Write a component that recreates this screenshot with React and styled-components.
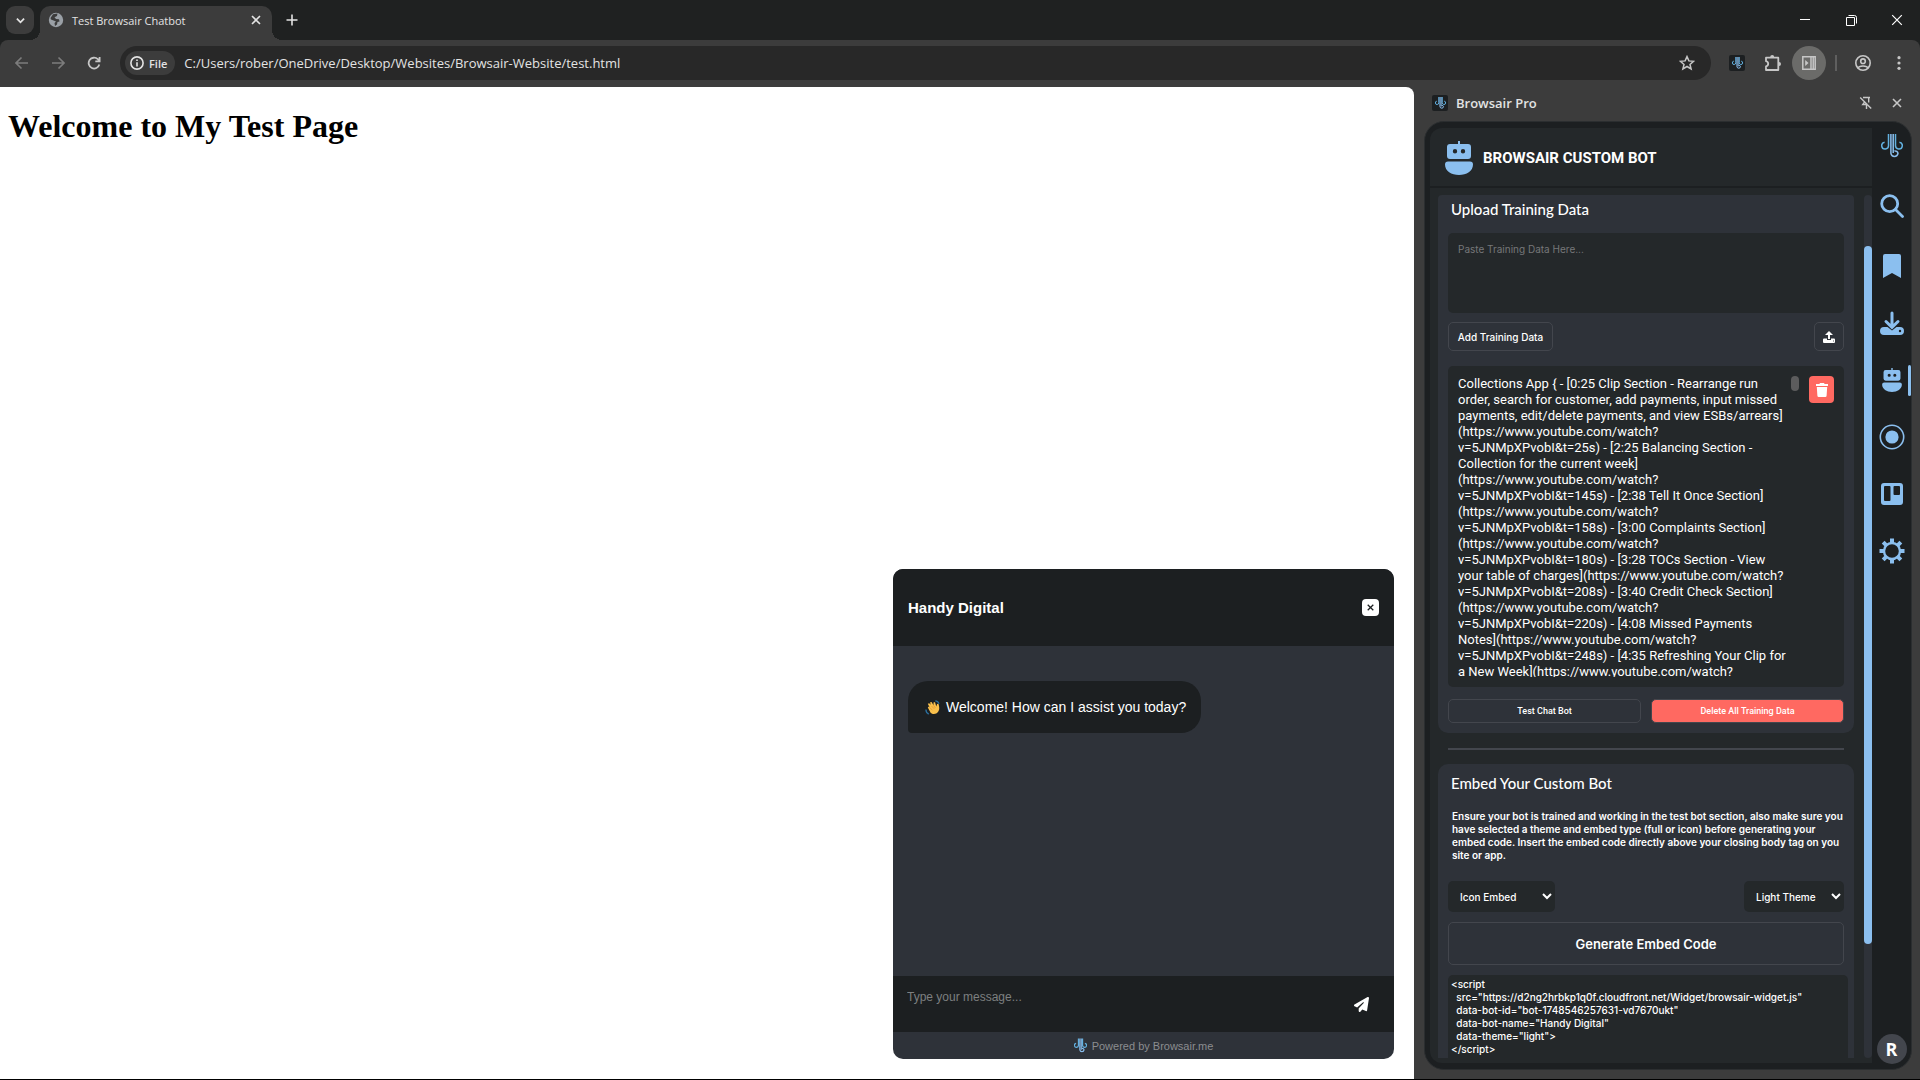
import { useState } from 'react';
import styled, { createGlobalStyle, css } from 'styled-components';

const colors = {
  strip: '#1f2121',
  chrome: '#3c3c3c',
  omnibox: '#282828',
  shell: '#1c1f21',
  panel: '#24282a',
  card: '#2e3239',
  line: '#43464d',
  blue: '#8bbfef',
  red: '#ff6961',
};

const uiFont = '"Open Sans", "Noto Sans", sans-serif';
const panelFont = 'Lato, "Noto Sans", sans-serif';
const denseFont = 'Roboto, "Noto Sans", sans-serif';
const smallFont = 'Inter, "Noto Sans", sans-serif';
const widgetFont = '"Liberation Sans", Arial, sans-serif';

const GlobalStyle = createGlobalStyle`
  * {
    box-sizing: border-box;
  }

  body {
    margin: 0;
    background: #000;
  }

  button, input, textarea, select {
    font: inherit;
    color: inherit;
    margin: 0;
  }

  button {
    padding: 0;
    border: 0;
    background: none;
    cursor: pointer;
  }

  svg {
    display: block;
    flex-shrink: 0;
  }
`;

/* ---------- icons ---------- */

const Stroke = ({ size = 16, width = 1.6, children }) => (
  <svg width={size} height={size} viewBox={`0 0 ${size} ${size}`} fill="none" stroke="currentColor" strokeWidth={width}>
    {children}
  </svg>
);

const BrandIcon = ({ width = 22, height = 24, stroke = 1.5 }) => (
  <svg width={width} height={height} viewBox="0 0 22 24" fill="none" stroke="#62b1e0" strokeWidth={stroke}>
    <path d="M7.500 0V11.500A3.400 3.400 0 1 1 3.600 8.300" />
    <path d="M14.500 0V11.500A3.400 3.400 0 1 0 18.400 8.300" />
    <path d="M9.900 0V19.400A3.600 3.600 0 0 0 17 19.400A2.900 2.900 0 0 0 13.400 17" stroke="#8bbfef" />
    <path d="M12.200 0V19" stroke="#8bbfef" />
  </svg>
);

const BotIcon = ({ width, height }) => (
  <svg width={width} height={height} viewBox="0 0 28 34" fill="currentColor">
    <path
      fillRule="evenodd"
      d="M13 0h2v3h8a3 3 0 0 1 3 3v9a3 3 0 0 1-3 3H5a3 3 0 0 1-3-3V6a3 3 0 0 1 3-3h8zM10 8a2.2 2.2 0 1 0 0 4.4A2.2 2.2 0 0 0 10 8zm8 0a2.2 2.2 0 1 0 0 4.4A2.2 2.2 0 0 0 18 8z"
    />
    <path d="M3 20.5h22a3 3 0 0 1 3 3C28 30 21.500 34 14 34S0 30 0 23.500a3 3 0 0 1 3-3z" />
  </svg>
);

const SearchIcon = () => (
  <Stroke size={24} width={2.8}>
    <circle cx="9.700" cy="9.700" r="8" />
    <path d="M15.500 15.500l7 7" strokeLinecap="round" />
  </Stroke>
);

const BookmarkIcon = () => (
  <svg width="18" height="24" viewBox="0 0 18 24" fill="currentColor">
    <path d="M2 0h14a2 2 0 0 1 2 2v22l-9-5-9 5V2a2 2 0 0 1 2-2z" />
  </svg>
);

const DownloadIcon = () => (
  <svg width="24" height="24" viewBox="0 0 24 24">
    <path d="M4 16h3.500l4.500 3.600 4.500-3.600H20a4 4 0 0 1 0 8H4a4 4 0 0 1 0-8z" fill="currentColor" />
    <circle cx="20" cy="20" r="1.200" fill="#1c1f21" />
    <path d="M12 2v14M6 10.500l6 5.800 6-5.800" fill="none" stroke="currentColor" strokeWidth="3" strokeLinecap="round" />
  </svg>
);

const RecordIcon = () => (
  <svg width="26" height="26" viewBox="0 0 26 26">
    <circle cx="13" cy="13" r="11.700" fill="none" stroke="currentColor" strokeWidth="1.600" />
    <circle cx="13" cy="13" r="6.600" fill="currentColor" />
  </svg>
);

const BoardIcon = () => (
  <svg width="22" height="22" viewBox="0 0 22 22" fill="currentColor">
    <path
      fillRule="evenodd"
      d="M3 0h16a3 3 0 0 1 3 3v16a3 3 0 0 1-3 3H3a3 3 0 0 1-3-3V3a3 3 0 0 1 3-3zM4 3a1 1 0 0 0-1 1v13a1 1 0 0 0 1 1h4.500a1 1 0 0 0 1-1V4a1 1 0 0 0-1-1zM13.500 3a1 1 0 0 0-1 1v7a1 1 0 0 0 1 1H18a1 1 0 0 0 1-1V4a1 1 0 0 0-1-1z"
    />
  </svg>
);

const GearIcon = () => (
  <svg width="26" height="26" viewBox="0 0 26 26">
    {[0, 45, 90, 135].map((angle) => (
      <path
        key={angle}
        d="M13 0.500v4.500M13 21v4.500"
        stroke="currentColor"
        strokeWidth="4"
        transform={`rotate(${angle} 13 13)`}
      />
    ))}
    <circle cx="13" cy="13" r="8" fill="#1c1f21" stroke="currentColor" strokeWidth="2.400" />
  </svg>
);

const UploadIcon = () => (
  <svg width="12" height="12" viewBox="0 0 12 12" fill="currentColor">
    <path d="M6 0l4 4H7v4H5V4H2z" />
    <path fillRule="evenodd" d="M1 7.500h3V9h4V7.500h3a1 1 0 0 1 1 1V11a1 1 0 0 1-1 1H1a1 1 0 0 1-1-1V8.500a1 1 0 0 1 1-1zM10 9.600v.8h.8v-.8z" />
  </svg>
);

const TrashIcon = () => (
  <svg width="12" height="14" viewBox="0 0 12 14" fill="currentColor">
    <path d="M4 0h4l.6 1H12v2H0V1h3.400z" />
    <path d="M.8 4h10.400l-.6 8.800A1.300 1.300 0 0 1 9.300 14H2.700a1.300 1.300 0 0 1-1.300-1.200z" />
  </svg>
);

const SendIcon = () => (
  <svg width="15" height="15" viewBox="0 0 512 512" fill="currentColor">
    <path d="M498 6c10 7 16 19 14 31l-64 416a32 32 0 0 1-44 25l-120-50-68 74a32 32 0 0 1-56-22v-84c0-4 2-8 4-11L332 202a16 16 0 0 0-22-22L106 361 18 317a32 32 0 0 1-2-57L464 4a32 32 0 0 1 34 2z" />
  </svg>
);

const CloseIcon = ({ size = 10, width = 1.6 }) => (
  <svg width={size} height={size} viewBox="0 0 10 10" fill="none" stroke="currentColor" strokeWidth={width}>
    <path d="M1 1l8 8M9 1L1 9" />
  </svg>
);

const ChevronIcon = ({ width = 10 }) => (
  <svg width={width} height={width} viewBox="0 0 10 10" fill="none" stroke="currentColor" strokeWidth="2">
    <path d="M1 3l4 4 4-4" />
  </svg>
);

const GlobeIcon = () => (
  <svg width="16" height="16" viewBox="0 0 16 16">
    <circle cx="8" cy="8" r="7.200" fill="#9aa0a6" />
    <path d="M5 2.200l4.500-.6L9 4 6.500 5.200 8 7l3 .3.500 2.200L9.500 10 9 12.500 7 14 6.500 11 8 9.500 3 7.500 2.500 6z" fill="#3c3c3c" />
  </svg>
);

const ArrowIcon = ({ flip }) => (
  <Stroke size={14} width={1.6}>
    <path d={flip ? 'M1 7h12M7.500 1.500L13 7l-5.500 5.500' : 'M13 7H1M6.500 1.500L1 7l5.500 5.500'} />
  </Stroke>
);

const ReloadIcon = () => (
  <Stroke size={14} width={1.8}>
    <path d="M12.300 8.500A5.400 5.400 0 1 1 10.800 3.200l1.700 1.700M12.600 1v4.300H8.300" />
  </Stroke>
);

const InfoIcon = () => (
  <Stroke size={14} width={1.6}>
    <circle cx="7" cy="7" r="6.100" />
    <path d="M7 6.200v4.300M7 3.500v1.500" />
  </Stroke>
);

const StarIcon = () => (
  <Stroke size={16} width={1.5}>
    <path d="M8 1.600l1.900 4.300 4.700.4-3.600 3.100 1.100 4.600L8 11.500 3.900 14 5 9.400 1.400 6.300l4.700-.4z" />
  </Stroke>
);

const PuzzleIcon = () => (
  <svg width="16" height="16" viewBox="0 0 16 16" fill="none" stroke="currentColor" strokeWidth="1.800">
    <path d="M1 2.700h12.300v12.300H1v-3.500a2.700 2.700 0 0 0 0-5.300z" strokeLinejoin="round" />
    <path d="M5.200 2a2 2 0 0 1 4 0zM14 7a2 2 0 0 1 0 4z" fill="currentColor" stroke="none" />
  </svg>
);

const SidePanelIcon = () => (
  <Stroke size={14} width={1.5}>
    <path d="M.8.8h12.400v12.400H.8zM9 .8v12.400M11.200 .8v12.400" />
    <path d="M3.200 4l3.300 3-3.300 3z" fill="currentColor" stroke="none" />
  </Stroke>
);

const ProfileIcon = () => (
  <Stroke size={16} width={1.6}>
    <circle cx="8" cy="8" r="7.200" />
    <circle cx="8" cy="6.200" r="2.300" />
    <path d="M3 13.200c1-3 9-3 10 0" />
  </Stroke>
);

const MenuIcon = () => (
  <svg width="4" height="14" viewBox="0 0 4 14" fill="currentColor">
    <circle cx="2" cy="1.700" r="1.600" />
    <circle cx="2" cy="7" r="1.600" />
    <circle cx="2" cy="12.300" r="1.600" />
  </svg>
);

const PinOffIcon = () => (
  <Stroke size={14} width={1.4}>
    <path d="M4 1.500h7M5.300 5v1.300L3.700 8.500h5M9.700 1.500v5M7.500 8.500V13M1.200 1.500l11 11" />
  </Stroke>
);

/* ---------- browser chrome ---------- */

const Browser = styled.div`
  display: flex;
  flex-direction: column;
  height: 100vh;
  border-bottom: 1px solid #000;
  background: ${colors.strip};
  font-family: ${uiFont};
  color: #e3e3e3;
  overflow: hidden;
`;

const TabStrip = styled.div`
  display: flex;
  align-items: center;
  height: 40px;
  padding-left: 6px;
`;

const TabSearch = styled.button`
  display: grid;
  place-items: center;
  width: 28px;
  height: 28px;
  border-radius: 9px;
  background: ${colors.chrome};
`;

const Tab = styled.div`
  position: relative;
  display: flex;
  align-items: center;
  align-self: flex-end;
  gap: 8px;
  width: 232px;
  height: 34px;
  margin-left: 6px;
  padding: 0 11px 6px 8px;
  border-radius: 10px 10px 0 0;
  background: ${colors.chrome};
  font-size: 11px;

  &::before, &::after {
    content: '';
    position: absolute;
    bottom: 0;
    width: 10px;
    height: 10px;
  }

  &::before {
    right: 100%;
    background: radial-gradient(circle at 0 0, transparent 10px, ${colors.chrome} 10px);
  }

  &::after {
    left: 100%;
    background: radial-gradient(circle at 100% 0, transparent 10px, ${colors.chrome} 10px);
  }
`;

const TabTitle = styled.span`
  flex: 1;
  white-space: nowrap;
`;

const NewTab = styled.button`
  display: grid;
  place-items: center;
  width: 28px;
  height: 28px;
  margin-left: 6px;
`;

const WindowControls = styled.div`
  display: flex;
  height: 100%;
  margin-left: auto;
  color: #fff;
`;

const WindowButton = styled.button`
  display: grid;
  place-items: center;
  width: 46px;
`;

const Toolbar = styled.div`
  display: flex;
  align-items: center;
  gap: 2px;
  height: 47px;
  padding: 0 4px 1px 5px;
  border-radius: 8px 8px 0 0;
  background: ${colors.chrome};
  color: #c7c7c7;
`;

const ToolButton = styled.button`
  display: grid;
  place-items: center;
  width: 34px;
  height: 34px;
  border-radius: 50%;
  color: ${(props) => (props.$dim ? '#7c7c7c' : 'inherit')};
  background: ${(props) => (props.$active ? '#6b6b69' : 'none')};
`;

const Omnibox = styled.div`
  display: flex;
  flex: 1;
  align-items: center;
  height: 34px;
  margin: 0 7px;
  padding: 0 16px 0 5px;
  border-radius: 17px;
  background: ${colors.omnibox};
`;

const FileChip = styled.button`
  display: flex;
  align-items: center;
  gap: 5px;
  height: 24px;
  padding: 0 8px 0 5px;
  border-radius: 12px;
  background: ${colors.chrome};
  color: #e3e3e3;
  font-size: 11px;
  font-weight: 600;
`;

const UrlInput = styled.input`
  flex: 1;
  padding: 0;
  margin-left: 9px;
  border: 0;
  outline: 0;
  background: none;
  color: #e3e3e3;
  font-size: 13px;
`;

const BrandTile = styled.span`
  display: grid;
  place-items: center;
  width: 16px;
  height: 16px;
  border-radius: 2px;
  background: ${colors.shell};
`;

const Divider = styled.span`
  width: 2px;
  height: 16px;
  margin: 0 7px;
  background: #5f5f5f;
`;

const Body = styled.div`
  display: flex;
  flex: 1;
  min-height: 0;
  background: ${colors.chrome};
`;

/* ---------- test page and chat widget ---------- */

const Page = styled.main`
  position: relative;
  flex: 1;
  border-top-right-radius: 8px;
  background: #fff;
  color: #000;
`;

const PageTitle = styled.h1`
  margin: 21px 8px;
  font: bold 32px/37px "Liberation Serif", "Times New Roman", serif;
`;

const Widget = styled.section`
  position: absolute;
  right: 20px;
  bottom: 20px;
  display: flex;
  flex-direction: column;
  width: 501px;
  height: 490px;
  border-radius: 10px;
  background: ${colors.card};
  color: #fff;
  font-family: ${widgetFont};
  overflow: hidden;
`;

const WidgetHeader = styled.header`
  display: flex;
  align-items: center;
  justify-content: space-between;
  height: 77px;
  padding: 0 15px;
  background: ${colors.shell};
`;

const WidgetTitle = styled.h2`
  margin: 0;
  font-size: 15px;
`;

const WidgetClose = styled.button`
  display: grid;
  place-items: center;
  width: 17px;
  height: 17px;
  border-radius: 4px;
  background: #fff;
  color: #1c1f21;
`;

const Messages = styled.div`
  flex: 1;
  padding: 35px 15px;
`;

const Bubble = styled.p`
  display: flex;
  align-items: center;
  gap: 6px;
  width: fit-content;
  height: 52px;
  margin: 0;
  padding: 0 15px 0 17px;
  border-radius: 20px 20px 20px 4px;
  background: ${colors.shell};
  font-size: 14px;
`;

const Composer = styled.form`
  display: flex;
  align-items: center;
  height: 56px;
  padding: 0 25px 0 14px;
  background: ${colors.shell};
`;

const MessageBox = styled.textarea`
  flex: 1;
  height: 30px;
  padding: 0;
  border: 0;
  outline: 0;
  background: none;
  font-size: 12px;
  line-height: 16px;
  resize: none;

  &::placeholder {
    color: #7d7f80;
  }
`;

const Powered = styled.footer`
  display: flex;
  align-items: center;
  justify-content: center;
  gap: 5px;
  height: 27px;
  color: #8b8d90;
  font-size: 11px;
`;

/* ---------- extension side panel ---------- */

const SidePanel = styled.aside`
  display: flex;
  flex-direction: column;
  width: 506px;
  padding: 0 8px 9px 10px;
`;

const SideHeader = styled.header`
  display: flex;
  align-items: center;
  height: 34px;
  padding: 0 0 3px 8px;
  color: #c7c7c7;
`;

const SideTitle = styled.span`
  flex: 1;
  margin-left: 8px;
  color: #e3e3e3;
  font-size: 13px;
  font-weight: 600;
`;

const SideButton = styled.button`
  display: grid;
  place-items: center;
  width: 32px;
  height: 28px;

  &:last-child {
    width: 30px;
  }
`;

const Shell = styled.div`
  display: flex;
  flex: 1;
  min-height: 0;
  padding-left: 5px;
  border: 1px solid #2b2e30;
  border-radius: 20px;
  background: ${colors.shell};
  color: #fff;
  font-family: ${panelFont};
  overflow: hidden;
`;

const Main = styled.div`
  display: flex;
  flex: 1;
  flex-direction: column;
  min-width: 0;
  margin: 6px 0;
  border-radius: 12px 0 0 12px;
  background: ${colors.panel};
  overflow: hidden;
`;

const MainHeader = styled.header`
  display: flex;
  align-items: center;
  flex-shrink: 0;
  gap: 10px;
  height: 60px;
  padding: 2px 0 0 15px;
  border-bottom: 2px solid ${colors.shell};
  color: ${colors.blue};
`;

const MainTitle = styled.h2`
  margin: 0;
  color: #fff;
  font: 700 15px ${denseFont};
`;

const Scroller = styled.div`
  display: flex;
  flex: 1;
  gap: 10px;
  min-height: 0;
  padding: 7px 0 5px 8px;
`;

const ScrollContent = styled.div`
  flex: 1;
  min-width: 0;
  border-radius: 4px 4px 0 0;
  overflow: hidden;
`;

const ScrollTrack = styled.div`
  width: 8px;
  padding-top: 51px;
  border-radius: 4px;
  background: ${colors.card};
`;

const ScrollThumb = styled.div`
  height: 86%;
  border-radius: 4px;
  background: ${colors.blue};
`;

const Card = styled.section`
  display: flex;
  flex-direction: column;
  padding: ${(props) => (props.$scrolled ? '0' : '5px')} 10px 10px;
  border-radius: ${(props) => (props.$scrolled ? '0 0 10px 10px' : '10px')};
  background: ${colors.card};
`;

const CardTitle = styled.h3`
  margin: 0 3px;
  font-size: 15px;
  font-weight: 500;
  line-height: 28px;
`;

const Rule = styled.hr`
  height: 2px;
  margin: 15px 10px 14px;
  border: 0;
  background: ${colors.line};
`;

const TrainingInput = styled.textarea`
  height: 80px;
  margin-top: 10px;
  padding: 10px;
  border: 0;
  border-radius: 5px;
  outline: 0;
  background: ${colors.panel};
  font: 10px/13px ${smallFont};
  resize: none;

  &::placeholder {
    color: #767779;
  }
`;

const Row = styled.div`
  display: flex;
  justify-content: space-between;
  gap: 10px;
  margin-top: ${(props) => props.$top}px;
`;

const outlined = css`
  display: grid;
  place-items: center;
  border: 1px solid ${colors.line};
  border-radius: 5px;
`;

const OutlineButton = styled.button`
  ${outlined}
  width: ${(props) => props.$width || 'auto'};
  height: 29px;
  font: 500 10px ${smallFont};
`;

const SplitButton = styled.button`
  ${outlined}
  flex: 1;
  height: 24px;
  background: ${(props) => (props.$danger ? colors.red : 'none')};
  font: 500 9px ${denseFont};
`;

const DataItem = styled.div`
  display: flex;
  align-items: flex-start;
  gap: 10px;
  height: 321px;
  margin-top: 15px;
  padding: 10px;
  border-radius: 5px;
  background: ${colors.panel};
`;

const DataText = styled.div`
  flex: 1;
  min-width: 0;
  height: 301px;
  margin-right: -8px;
  font: 400 13px/16px ${denseFont};
  white-space: pre;
  overflow: hidden;
`;

const DataThumb = styled.div`
  width: 8px;
  height: 15px;
  border-radius: 4px;
  background: #5c5c5d;
`;

const DeleteButton = styled.button`
  display: grid;
  place-items: center;
  width: 25px;
  height: 27px;
  border-radius: 4px;
  background: ${colors.red};
`;

const Hint = styled.p`
  margin: 13px 4px 0;
  font: 600 10px/13px ${smallFont};
  white-space: pre;
`;

const SelectWrap = styled.label`
  position: relative;
  width: ${(props) => props.$width}px;

  svg {
    position: absolute;
    top: 10px;
    right: 3px;
    pointer-events: none;
  }
`;

const Select = styled.select`
  width: 100%;
  height: 31px;
  padding: 0 12px;
  border: 0;
  border-radius: 5px;
  outline: 0;
  background: ${colors.panel};
  font: 500 10px ${smallFont};
  appearance: none;
`;

const GenerateButton = styled.button`
  ${outlined}
  height: 43px;
  margin-top: 10px;
  font: 600 13px ${smallFont};
`;

const EmbedCode = styled.pre`
  height: 120px;
  margin: 10px -4px 0 0;
  padding: 3px;
  border-radius: 5px;
  background: ${colors.panel};
  font: 500 10px/13px ${smallFont};
`;

const Nav = styled.nav`
  display: flex;
  flex-direction: column;
  align-items: center;
  gap: 23px;
  width: 39px;
  padding: 7px 0 5px;
  color: ${colors.blue};
`;

const NavGroup = styled.div`
  display: flex;
  flex-direction: column;
  gap: 26px;
`;

const NavButton = styled.button`
  position: relative;
  display: grid;
  place-items: center;
  width: 39px;
  height: 34px;

  ${(props) => props.$active && css`
    &::after {
      content: '';
      position: absolute;
      top: 2px;
      right: 0;
      width: 3px;
      height: 31px;
      border-radius: 2px;
      background: ${colors.blue};
    }
  `}
`;

const Avatar = styled.button`
  width: 30px;
  height: 30px;
  margin-top: auto;
  border-radius: 50%;
  background: #43464d;
  color: #fff;
  font: 700 18px ${uiFont};
`;

const trainingData = `Collections App { - [0:25 Clip Section - Rearrange run
order, search for customer, add payments, input missed
payments, edit/delete payments, and view ESBs/arrears]
(https://www.youtube.com/watch?
v=5JNMpXPvobI&t=25s) - [2:25 Balancing Section -
Collection for the current week]
(https://www.youtube.com/watch?
v=5JNMpXPvobI&t=145s) - [2:38 Tell It Once Section]
(https://www.youtube.com/watch?
v=5JNMpXPvobI&t=158s) - [3:00 Complaints Section]
(https://www.youtube.com/watch?
v=5JNMpXPvobI&t=180s) - [3:28 TOCs Section - View
your table of charges](https://www.youtube.com/watch?
v=5JNMpXPvobI&t=208s) - [3:40 Credit Check Section]
(https://www.youtube.com/watch?
v=5JNMpXPvobI&t=220s) - [4:08 Missed Payments
Notes](https://www.youtube.com/watch?
v=5JNMpXPvobI&t=248s) - [4:35 Refreshing Your Clip for
a New Week](https://www.youtube.com/watch?`;

const hint = `Ensure your bot is trained and working in the test bot section, also make sure you
have selected a theme and embed type (full or icon) before generating your
embed code. Insert the embed code directly above your closing body tag on you
site or app.`;

const embedCode = `<script
  src="https://d2ng2hrbkp1q0f.cloudfront.net/Widget/browsair-widget.js"
  data-bot-id="bot-1748546257631-vd7670ukt"
  data-bot-name="Handy Digital"
  data-theme="light">
</script>`;

const BrowserTop = () => {
  const [url, setUrl] = useState('C:/Users/rober/OneDrive/Desktop/Websites/Browsair-Website/test.html');

  return (
    <>
      <TabStrip>
        <TabSearch aria-label="Search tabs"><ChevronIcon width={9} /></TabSearch>
        <Tab>
          <GlobeIcon />
          <TabTitle>Test Browsair Chatbot</TabTitle>
          <button aria-label="Close tab"><CloseIcon /></button>
        </Tab>
        <NewTab aria-label="New tab">
          <Stroke size={12} width={1.6}><path d="M6 .5v11M.5 6h11" /></Stroke>
        </NewTab>
        <WindowControls>
          <WindowButton aria-label="Minimize">
            <Stroke size={10} width={1}><path d="M0 4.500h10" /></Stroke>
          </WindowButton>
          <WindowButton aria-label="Restore">
            <Stroke size={11} width={1}>
              <path d="M.5 2.500h8v8h-8zM2.500 .5h6a2 2 0 0 1 2 2v6" />
            </Stroke>
          </WindowButton>
          <WindowButton aria-label="Close"><CloseIcon size={12} width={1} /></WindowButton>
        </WindowControls>
      </TabStrip>
      <Toolbar>
        <ToolButton $dim aria-label="Back"><ArrowIcon /></ToolButton>
        <ToolButton $dim aria-label="Forward"><ArrowIcon flip /></ToolButton>
        <ToolButton aria-label="Reload"><ReloadIcon /></ToolButton>
        <Omnibox>
          <FileChip><InfoIcon />File</FileChip>
          <UrlInput aria-label="Address" value={url} onChange={(e) => setUrl(e.target.value)} />
          <button aria-label="Bookmark this tab"><StarIcon /></button>
        </Omnibox>
        <ToolButton aria-label="Browsair">
          <BrandTile><BrandIcon width={11} height={12} stroke={2} /></BrandTile>
        </ToolButton>
        <ToolButton aria-label="Extensions"><PuzzleIcon /></ToolButton>
        <ToolButton $active aria-label="Side panel"><SidePanelIcon /></ToolButton>
        <Divider />
        <ToolButton aria-label="Profile"><ProfileIcon /></ToolButton>
        <ToolButton aria-label="Menu"><MenuIcon /></ToolButton>
      </Toolbar>
    </>
  );
};

const ChatWidget = () => (
  <Widget>
    <WidgetHeader>
      <WidgetTitle>Handy Digital</WidgetTitle>
      <WidgetClose aria-label="Close chat"><CloseIcon size={7} width={1.8} /></WidgetClose>
    </WidgetHeader>
    <Messages>
      <Bubble>
        <svg width="15" height="15" viewBox="0 0 16 16">
          <path d="M1 10c0 2 1 4 3 5M11 1c2 0 3 1 4 3" fill="none" stroke="#2a6f9e" strokeWidth="1.400" />
          <path d="M3 8l1-1 1 1-2-4 1.500-.6L6 5 5.500 2.500 7 2l2 3.500.2-3 1.500-.2L12 7l1-3 1.600.6c.4 3 1.400 5-.6 8-2 3-6 3-8 1z" fill="#f9c04c" />
          <path d="M5 8l3 3M7 6.500l3 3M9 5.500l2 3" stroke="#dd8f2c" strokeWidth=".7" />
        </svg>
        Welcome! How can I assist you today?
      </Bubble>
    </Messages>
    <Composer onSubmit={(e) => e.preventDefault()}>
      <MessageBox aria-label="Message" placeholder="Type your message..." />
      <button aria-label="Send"><SendIcon /></button>
    </Composer>
    <Powered>
      <BrandIcon width={13} height={15} stroke={2} />
      Powered by Browsair.me
    </Powered>
  </Widget>
);

const BotPanel = () => (
  <Main>
    <MainHeader>
      <BotIcon width={28} height={34} />
      <MainTitle>BROWSAIR CUSTOM BOT</MainTitle>
    </MainHeader>
    <Scroller>
      <ScrollContent>
        <Card $scrolled>
          <CardTitle>Upload Training Data</CardTitle>
          <TrainingInput aria-label="Training data" placeholder="Paste Training Data Here..." />
          <Row $top={9}>
            <OutlineButton $width="105px">Add Training Data</OutlineButton>
            <OutlineButton $width="30px" aria-label="Upload file"><UploadIcon /></OutlineButton>
          </Row>
          <DataItem>
            <DataText>{trainingData}</DataText>
            <DataThumb />
            <DeleteButton aria-label="Delete item"><TrashIcon /></DeleteButton>
          </DataItem>
          <Row $top={12}>
            <SplitButton>Test Chat Bot</SplitButton>
            <SplitButton $danger>Delete All Training Data</SplitButton>
          </Row>
        </Card>
        <Rule />
        <Card>
          <CardTitle>Embed Your Custom Bot</CardTitle>
          <Hint>{hint}</Hint>
          <Row $top={19}>
            <SelectWrap $width={107}>
              <Select aria-label="Embed type"><option>Icon Embed</option><option>Full Embed</option></Select>
              <ChevronIcon />
            </SelectWrap>
            <SelectWrap $width={100}>
              <Select aria-label="Theme"><option>Light Theme</option><option>Dark Theme</option></Select>
              <ChevronIcon />
            </SelectWrap>
          </Row>
          <GenerateButton>Generate Embed Code</GenerateButton>
          <EmbedCode>{embedCode}</EmbedCode>
        </Card>
      </ScrollContent>
      <ScrollTrack><ScrollThumb /></ScrollTrack>
    </Scroller>
  </Main>
);

const PanelNav = () => (
  <Nav>
    <NavGroup>
      <NavButton aria-label="Home"><BrandIcon /></NavButton>
      <NavButton aria-label="Search"><SearchIcon /></NavButton>
      <NavButton aria-label="Bookmarks"><BookmarkIcon /></NavButton>
    </NavGroup>
    <NavButton aria-label="Downloads"><DownloadIcon /></NavButton>
    <NavButton $active aria-label="Custom bot"><BotIcon width={20} height={24} /></NavButton>
    <NavButton aria-label="Record"><RecordIcon /></NavButton>
    <NavButton aria-label="Boards"><BoardIcon /></NavButton>
    <NavButton aria-label="Settings"><GearIcon /></NavButton>
    <Avatar>R</Avatar>
  </Nav>
);

export default function App() {
  return (
    <>
      <GlobalStyle />
      <Browser>
        <BrowserTop />
        <Body>
          <Page>
            <PageTitle>Welcome to My Test Page</PageTitle>
            <ChatWidget />
          </Page>
          <SidePanel>
            <SideHeader>
              <BrandTile><BrandIcon width={11} height={12} stroke={2} /></BrandTile>
              <SideTitle>Browsair Pro</SideTitle>
              <SideButton aria-label="Unpin"><PinOffIcon /></SideButton>
              <SideButton aria-label="Close panel"><CloseIcon /></SideButton>
            </SideHeader>
            <Shell>
              <BotPanel />
              <PanelNav />
            </Shell>
          </SidePanel>
        </Body>
      </Browser>
    </>
  );
}
